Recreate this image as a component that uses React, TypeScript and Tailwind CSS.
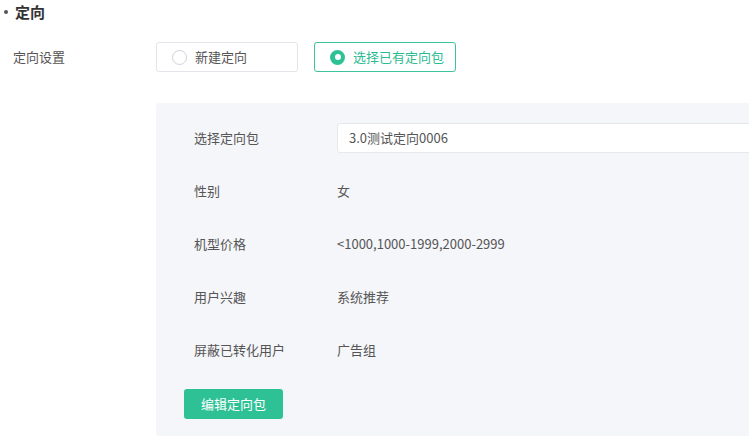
const rows: { label: string; value: string }[] = [
  { label: '性别', value: '女' },
  { label: '机型价格', value: '<1000,1000-1999,2000-2999' },
  { label: '用户兴趣', value: '系统推荐' },
  { label: '屏蔽已转化用户', value: '广告组' },
];

function Radio({ label, checked }: { label: string; checked?: boolean }) {
  return (
    <div
      className={
        checked
          ? 'flex h-[30px] w-[142px] items-center gap-2 rounded-[3px] border border-[#3cc39b] pl-[15px] text-[#2dbb91]'
          : 'flex h-[30px] w-[142px] items-center gap-2 rounded-[3px] border border-[#e3e5ea] pl-[15px] text-[#555]'
      }
    >
      {checked ? (
        <span className="flex h-[15px] w-[15px] items-center justify-center rounded-full bg-[#2fc196]">
          <span className="h-[6px] w-[6px] rounded-full bg-white" />
        </span>
      ) : (
        <span className="h-[15px] w-[15px] rounded-full border border-[#cfd3da] bg-white" />
      )}
      <span>{label}</span>
    </div>
  );
}

export default function App() {
  return (
    <div
      className="relative h-[437px] w-[749px] overflow-hidden bg-white text-[13px] text-[#555]"
      style={{ fontFamily: '"Noto Sans CJK SC", "Noto Sans", sans-serif' }}
    >
      <div className="flex h-[24px] items-center pl-[4px]">
        <span className="h-[4px] w-[4px] rounded-full bg-[#555]" />
        <span className="ml-[7px] text-[15px] font-bold text-[#333]">定向</span>
      </div>

      <div className="mt-[18px] flex h-[30px] items-center">
        <span className="w-[156px] pl-[13px]">定向设置</span>
        <div className="flex gap-4">
          <Radio label="新建定向" />
          <Radio label="选择已有定向包" checked />
        </div>
      </div>

      <section className="mt-[31px] ml-[156px] w-[640px] rounded-l-[4px] bg-[#f5f6fa] pt-[20px] pb-[17px] pl-[28px]">
        <div className="flex flex-col gap-[23px] pl-[10px]">
          <div className="flex h-[30px] items-center">
            <span className="w-[143px]">选择定向包</span>
            <div className="flex h-[30px] flex-1 items-center rounded-[3px] border border-[#e6e8ec] bg-white pl-[11px] text-[#555]">
              3.0测试定向0006
            </div>
          </div>
          {rows.map((r) => (
            <div key={r.label} className="flex h-[30px] items-center">
              <span className="w-[143px]">{r.label}</span>
              <span>{r.value}</span>
            </div>
          ))}
        </div>
        <button className="mt-[24px] flex h-[30px] w-[99px] items-center justify-center rounded-[3px] bg-[#2fc196] text-[13px] text-white">
          编辑定向包
        </button>
      </section>
    </div>
  );
}
